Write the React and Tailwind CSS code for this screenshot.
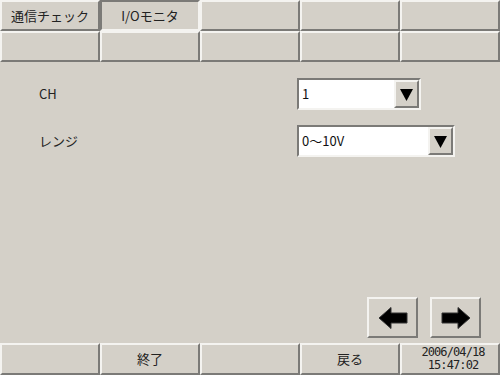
const raised = 'border-t-2 border-l-2 border-b-2 border-r-2 border-t-[#f4f3f0] border-l-[#f4f3f0] border-b-[#7b7a77] border-r-[#7b7a77]';
const sunken = 'border-t-2 border-l-2 border-b-2 border-r-2 border-t-[#7b7a77] border-l-[#7b7a77] border-b-[#f4f3f0] border-r-[#f4f3f0]';

const font = { fontFamily: '"Noto Sans CJK JP", "DejaVu Sans", sans-serif' };

function Tab({ label, active }) {
  return (
    <div
      className={`flex h-[31px] items-center justify-center text-[13px] text-[#222] ${active ? sunken : raised}`}
    >
      {label}
    </div>
  );
}

function Select({ value, width }) {
  return (
    <div className={`flex h-[32px] bg-white ${sunken}`} style={{ width }}>
      <div className="flex flex-1 items-center pl-[3px] text-[13px] text-[#111]">{value}</div>
      <div className={`flex w-[25px] items-center justify-center bg-[#d4d0c8] ${raised}`}>
        <svg width="13" height="13" viewBox="0 0 13 13">
          <polygon points="0,1 13,1 6.5,13" fill="#000" />
        </svg>
      </div>
    </div>
  );
}

function ArrowBtn({ dir }) {
  return (
    <div className={`flex h-[41px] w-[51px] items-center justify-center ${raised}`}>
      <svg width="30" height="22" viewBox="0 0 30 22" style={{ transform: dir === 'right' ? 'scaleX(-1)' : 'none' }}>
        <polygon points="1,11 13,0.5 13,6 29,6 29,16 13,16 13,21.5" fill="#000" stroke="#333" strokeWidth="1" />
      </svg>
    </div>
  );
}

export default function App() {
  return (
    <div className="flex h-[375px] w-[500px] flex-col overflow-hidden bg-[#d4d0c8]" style={font}>
      <div className="grid grid-cols-5">
        <Tab label="通信チェック" />
        <Tab label="I/Oモニタ" active />
        <Tab />
        <Tab />
        <Tab />
        <Tab />
        <Tab />
        <Tab />
        <Tab />
        <Tab />
      </div>

      <div className="flex flex-1 flex-col pt-[16px]">
        <div className="flex items-center">
          <div className="w-[297px] pl-[39px] text-[13px] text-[#222]">CH</div>
          <Select value="1" width={124} />
        </div>
        <div className="mt-[15px] flex items-center">
          <div className="w-[297px] pl-[39px] text-[13px] text-[#222]">レンジ</div>
          <Select value="0～10V" width={158} />
        </div>
        <div className="mt-auto mb-[5px] flex justify-end gap-[12px] pr-[19px]">
          <ArrowBtn dir="left" />
          <ArrowBtn dir="right" />
        </div>
      </div>

      <div className="grid h-[32px] grid-cols-5">
        <div className={raised} />
        <div className={`flex items-center justify-center text-[13px] text-[#222] ${raised}`}>終了</div>
        <div className={raised} />
        <div className={`flex items-center justify-center text-[13px] text-[#222] ${raised}`}>戻る</div>
        <div
          className={`flex flex-col items-center justify-center pl-[6px] text-[12px] leading-[13px] text-[#222] ${raised}`}
          style={{ fontFamily: '"DejaVu Sans Mono", monospace', letterSpacing: '-0.9px' }}
        >
          <span>2006/04/18</span>
          <span>15:47:02</span>
        </div>
      </div>
    </div>
  );
}
